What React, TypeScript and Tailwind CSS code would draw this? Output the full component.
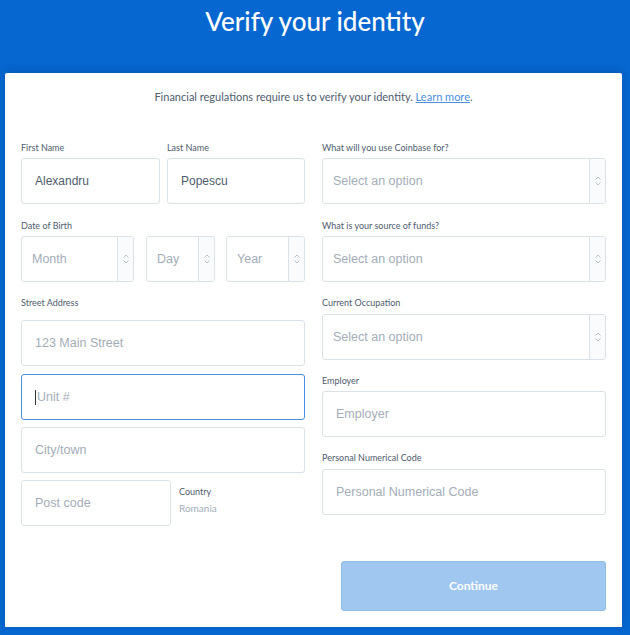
import React from "react";

/* ================= Small pieces ================= */

function Label({ children, className = "" }: { children: React.ReactNode; className?: string }) {
  return (
    <div
      className={`h-[12px] text-[9px] leading-[12px] text-[#4e5c6e] font-['Lato',sans-serif] ${className}`}
    >
      {children}
    </div>
  );
}

function TextBox({
  value,
  placeholder,
  focused = false,
  className = "",
}: {
  value?: string;
  placeholder: string;
  focused?: boolean;
  className?: string;
}) {
  return (
    <div
      className={`h-[46px] rounded-[3px] border bg-white flex items-center px-[13px] font-['Liberation_Sans',Arial,sans-serif] ${
        focused ? "border-[#4a90e2]" : "border-[#dae1e9]"
      } ${className}`}
    >
      {focused && <span className="w-px h-[15px] bg-[#333] mr-[1px]" />}
      {value ? (
        <span className="text-[12px] text-[#4e5c6e]">{value}</span>
      ) : (
        <span className="text-[12.5px] text-[#a3adb8]">{placeholder}</span>
      )}
    </div>
  );
}

function Chevrons() {
  return (
    <svg width="8" height="12" viewBox="0 0 8 12" fill="none" stroke="#b9c2cc" strokeWidth="1">
      <path d="M1.5 4.5 L4 2 L6.5 4.5" />
      <path d="M1.5 7.5 L4 10 L6.5 7.5" />
    </svg>
  );
}

function SelectBox({ placeholder, className = "" }: { placeholder: string; className?: string }) {
  return (
    <div
      className={`h-[46px] rounded-[3px] border border-[#dae1e9] bg-white flex overflow-hidden ${className}`}
    >
      <div className="flex-1 flex items-center px-[10px] text-[12.5px] text-[#a3adb8] font-['Liberation_Sans',Arial,sans-serif] whitespace-nowrap">
        {placeholder}
      </div>
      <div className="w-[16px] border-l border-[#dae1e9] bg-[#f9fbfc] flex items-center justify-center">
        <Chevrons />
      </div>
    </div>
  );
}

/* ================= Main ================= */

export default function App() {
  return (
    <div className="w-[630px] h-[635px] bg-[#0667d0] overflow-hidden relative">
      <h1 className="h-[73px] pt-[4px] text-center text-white text-[26px] leading-[34px] font-['Lato',sans-serif] font-medium">
        Verify your identity
      </h1>

      <div className="ml-[5px] w-[617px] bg-white rounded-t-[2px] pt-[17px] pl-[16px] pr-[16px] pb-[16px] shadow-[0_-2px_8px_rgba(0,0,0,0.15)]">
        <p className="text-center text-[11px] leading-[14px] text-[#4e5c6e] font-['Lato',sans-serif]">
          Financial regulations require us to verify your identity.{" "}
          <span className="text-[#4a8fe2] underline">Learn more</span>.
        </p>

        <div className="mt-[38px] flex gap-[17px]">
          {/* LEFT COLUMN */}
          <div className="w-[284px] flex flex-col">
            <div className="flex gap-[7px]">
              <div className="w-[139px]">
                <Label className="mb-[4px]">First Name</Label>
                <TextBox value="Alexandru" placeholder="First Name" />
              </div>
              <div className="w-[138px]">
                <Label className="mb-[4px]">Last Name</Label>
                <TextBox value="Popescu" placeholder="Last Name" />
              </div>
            </div>

            <Label className="mt-[16px] mb-[4px]">Date of Birth</Label>
            <div className="flex">
              <SelectBox placeholder="Month" className="w-[113px]" />
              <SelectBox placeholder="Day" className="w-[69px] ml-[12px]" />
              <SelectBox placeholder="Year" className="w-[79px] ml-[11px]" />
            </div>

            <Label className="mt-[15px] mb-[11px]">Street Address</Label>
            <TextBox placeholder="123 Main Street" />
            <TextBox placeholder="Unit #" focused className="mt-[8px]" />
            <TextBox placeholder="City/town" className="mt-[7px]" />
            <div className="mt-[7px] flex">
              <TextBox placeholder="Post code" className="w-[150px]" />
              <div className="ml-[8px] pt-[6px]">
                <Label>Country</Label>
                <div className="mt-[4px] text-[10px] leading-[12px] text-[#a3adb8] font-['Lato',sans-serif]">
                  Romania
                </div>
              </div>
            </div>
          </div>

          {/* RIGHT COLUMN */}
          <div className="w-[284px] flex flex-col">
            <Label className="mb-[4px]">What will you use Coinbase for?</Label>
            <SelectBox placeholder="Select an option" />

            <Label className="mt-[16px] mb-[4px]">What is your source of funds?</Label>
            <SelectBox placeholder="Select an option" />

            <Label className="mt-[15px] mb-[5px]">Current Occupation</Label>
            <SelectBox placeholder="Select an option" />

            <Label className="mt-[15px] mb-[4px]">Employer</Label>
            <TextBox placeholder="Employer" />

            <Label className="mt-[15px] mb-[5px]">Personal Numerical Code</Label>
            <TextBox placeholder="Personal Numerical Code" />

            <button className="mt-[46px] ml-[19px] w-[265px] h-[50px] rounded-[3px] bg-[#9fc7ef] border border-[#94bde6] text-white text-[12px] font-bold font-['Lato',sans-serif]">
              Continue
            </button>
          </div>
        </div>
      </div>
    </div>
  );
}
